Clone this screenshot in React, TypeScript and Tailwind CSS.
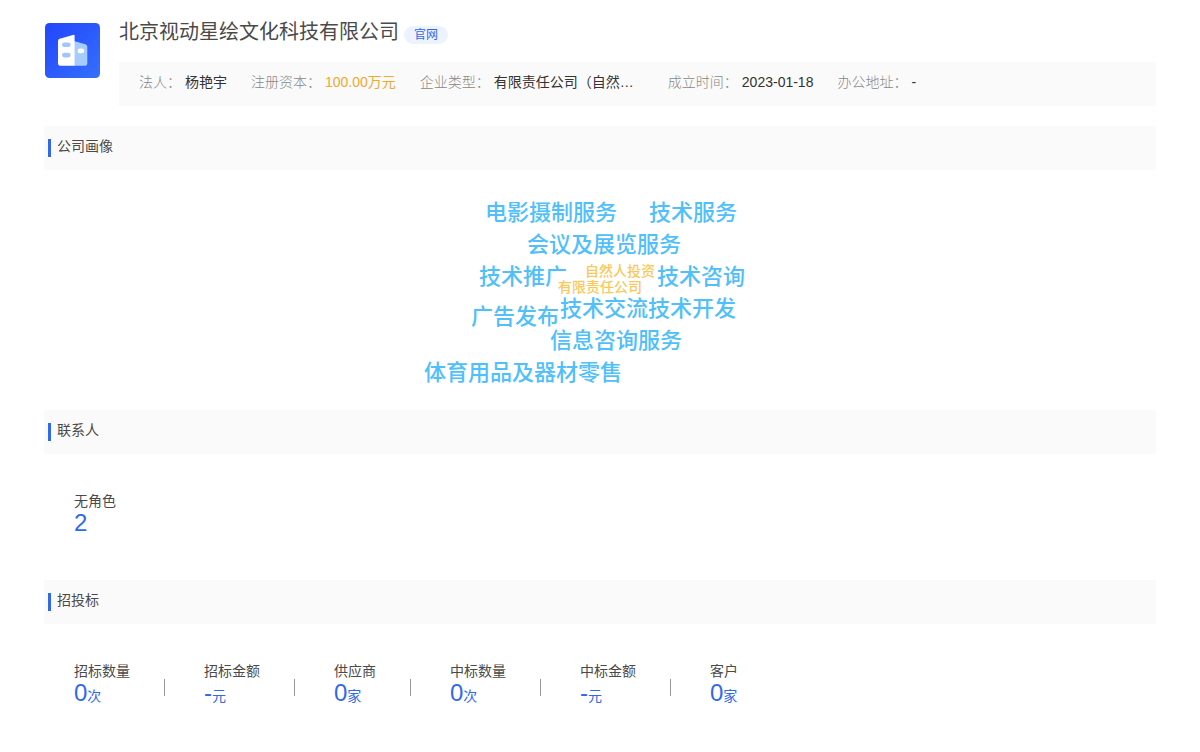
import type { ReactNode } from "react";

type Info = { label: string; value: string; valueClass?: string };
type Stat = { label: string; value: string; unit?: string };
type Word = { text: string; place: string; minor?: boolean };

const infos: Info[] = [
  { label: "法人", value: "杨艳宇" },
  { label: "注册资本", value: "100.00万元", valueClass: "text-[#f0a830]" },
  { label: "企业类型", value: "有限责任公司（自然…", valueClass: "w-[150px] text-[#333333]" },
  { label: "成立时间", value: "2023-01-18" },
  { label: "办公地址", value: "-" },
];

const words: Word[] = [
  { text: "电影摄制服务", place: "left-[61px] top-[27px]" },
  { text: "技术服务", place: "left-[225px] top-[27px]" },
  { text: "会议及展览服务", place: "left-[103px] top-[59px]" },
  { text: "技术推广", place: "left-[55px] top-[91px]" },
  { text: "自然人投资", place: "left-[161px] top-[93px]", minor: true },
  { text: "技术咨询", place: "left-[233px] top-[91px]" },
  { text: "有限责任公司", place: "left-[134px] top-[109px]", minor: true },
  { text: "广告发布", place: "left-[47px] top-[131px]" },
  { text: "技术交流", place: "left-[136px] top-[123px]" },
  { text: "技术开发", place: "left-[224px] top-[123px]" },
  { text: "信息咨询服务", place: "left-[126px] top-[155px]" },
  { text: "体育用品及器材零售", place: "left-0 top-[187px]" },
];

const contacts: Stat[] = [{ label: "无角色", value: "2" }];

const bids: Stat[] = [
  { label: "招标数量", value: "0", unit: "次" },
  { label: "招标金额", value: "-", unit: "元" },
  { label: "供应商", value: "0", unit: "家" },
  { label: "中标数量", value: "0", unit: "次" },
  { label: "中标金额", value: "-", unit: "元" },
  { label: "客户", value: "0", unit: "家" },
];

function Logo() {
  return (
    <svg viewBox="0 0 55 55" className="mt-px ml-px size-[55px] shrink-0" aria-hidden="true">
      <defs>
        <linearGradient id="tile" x1="0" y1="0" x2="1" y2="1">
          <stop offset="0" stopColor="#2345fb" />
          <stop offset="1" stopColor="#3470fd" />
        </linearGradient>
      </defs>
      <rect width="55" height="55" rx="4.5" fill="url(#tile)" />
      <path d="M29 18 40.3 21.3Q42.3 21.9 42.3 23.8V40.5Q42.3 42.8 40 42.8H29Z" fill="#a5ccfc" />
      <path d="M29.6 12.2V42.8H15.3Q13 42.8 13 40.5V18Q13 16.3 14.7 15.8L28 12Q29.6 11.5 29.6 12.2Z" fill="#fff" />
      <rect x="17" y="19.4" width="8.6" height="4.6" rx="2.3" fill="#a5c5fa" />
      <rect x="17" y="29.8" width="8.6" height="4.6" rx="2.3" fill="#a5c5fa" />
      <rect x="32.6" y="25.6" width="6.6" height="4.6" rx="2.3" fill="#fff" />
    </svg>
  );
}

function Section({ title, children }: { title: string; children: ReactNode }) {
  return (
    <section>
      <div className="flex h-11 items-center bg-[#fafafa] pl-1">
        <span className="h-[18px] w-[3px] bg-[#3069ea]" />
        <h2 className="ml-1.5 pb-1 leading-5">{title}</h2>
      </div>
      {children}
    </section>
  );
}

function Stats({ items }: { items: Stat[] }) {
  return (
    <dl className="flex px-[30px] pt-9">
      {items.map((item, i) => (
        <div key={item.label} className="flex items-center">
          {i > 0 && <span className="mt-2.5 mr-[39px] ml-[34px] h-[17px] w-px bg-[#999999]" />}
          <div>
            <dt className="leading-[22px]">{item.label}</dt>
            <dd className="flex h-[22px] items-baseline text-2xl leading-[22px] text-[#3069ea]">
              {item.value}
              {item.unit && <span className="text-sm leading-[22px]">{item.unit}</span>}
            </dd>
          </div>
        </div>
      ))}
    </dl>
  );
}

export default function App() {
  return (
    <main
      lang="zh-CN"
      className="bg-white px-11 pt-[22px] pb-10 font-['Liberation_Sans','Noto_Sans_CJK_SC',sans-serif] text-sm text-[#4a4a4a]"
    >
      <header className="mb-5 flex gap-[19px]">
        <Logo />
        <div className="min-w-0 flex-1">
          <div className="flex h-10 items-start gap-[5px]">
            <h1 className="-mt-1 text-xl leading-7">北京视动星绘文化科技有限公司</h1>
            <a href="#site" className="mt-1 rounded-full bg-[#ecf3fd] px-2.5 text-xs leading-[18px] text-[#3069ea]">
              官网
            </a>
          </div>
          <dl className="flex h-11 gap-6 bg-[#fafafa] px-5 pt-2.5 leading-5">
            {infos.map((info) => (
              <div key={info.label} className="flex gap-1 whitespace-nowrap">
                <dt className="font-light text-[#888888]">{info.label}：</dt>
                <dd className={info.valueClass ?? "text-[#333333]"}>{info.value}</dd>
              </div>
            ))}
          </dl>
        </div>
      </header>

      <Section title="公司画像">
        <div className="flex h-60 justify-center">
          <ul className="relative h-full w-[352px] font-medium">
            {words.map((word) => (
              <li
                key={word.text}
                className={`absolute whitespace-nowrap ${word.place} ${
                  word.minor ? "text-sm leading-4 text-[#fac858]" : "text-[22px] leading-8 text-[#4fc0fa]"
                }`}
              >
                {word.text}
              </li>
            ))}
          </ul>
        </div>
      </Section>

      <Section title="联系人">
        <div className="h-[126px]">
          <Stats items={contacts} />
        </div>
      </Section>

      <Section title="招投标">
        <Stats items={bids} />
      </Section>
    </main>
  );
}
